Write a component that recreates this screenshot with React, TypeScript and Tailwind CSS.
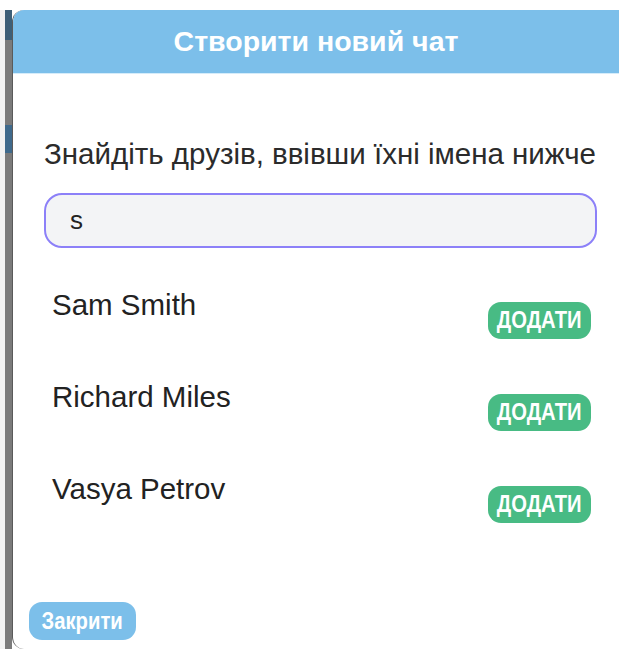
import React from "react";

const friends = ["Sam Smith", "Richard Miles", "Vasya Petrov"];

export default function App() {
  return (
    <div className="w-[619px] h-[649px] bg-white flex flex-col overflow-hidden font-['Liberation_Sans',Arial,sans-serif]">
      <div className="h-[10px] shrink-0" />
      <div className="flex flex-1 min-h-0">
        {/* page behind the dialog */}
        <div className="w-[12px] shrink-0 flex">
          <div className="w-[5px] bg-[#f2f2f2]" />
          <div className="flex-1 flex flex-col bg-[#7b7b7b]">
            <div className="h-[30px] bg-[#3d5f78]" />
            <div className="h-[85px]" />
            <div className="h-[28px] bg-[#3f6a8c]" />
          </div>
        </div>

        {/* dialog */}
        <div className="flex-1 flex flex-col bg-white rounded-l-[12px] overflow-hidden border-l border-[#5a5a5a]">
          <div className="h-[64px] shrink-0 bg-[#7cbfea] border-b border-[#d5ecfa] flex items-center justify-center">
            <h2 className="text-white font-bold text-[28.5px] leading-none whitespace-nowrap">Створити новий чат</h2>
          </div>

          <div className="flex-1 flex flex-col px-[31px]">
            <p className="mt-[62px] text-[29.5px] leading-[36px] text-[#2b2b2b] whitespace-nowrap">
              Знайдіть друзів, ввівши їхні імена нижче
            </p>
            <div className="mt-[21px] h-[55px] w-[553px] rounded-[18px] bg-[#f3f4f6] border-2 border-[#8c80f8] flex items-center px-[24px] text-[26px] text-[#222]">
              s
            </div>

            <div className="mt-[54px] flex flex-col gap-[55px] w-[553px]">
              {friends.map((name) => (
                <div key={name} className="flex justify-between items-start h-[37px] pl-[8px] pr-[6px]">
                  <span className="text-[29.5px] leading-[34px] text-[#222] -mt-[14px] whitespace-nowrap">{name}</span>
                  <button className="h-[37px] w-[103px] rounded-[13px] bg-[#48bb84] text-white font-bold text-[23px] leading-none flex items-center justify-center">
                    <span className="inline-block scale-x-[0.88]">ДОДАТИ</span>
                  </button>
                </div>
              ))}
            </div>

            <div className="flex-1" />
            <div className="mb-[9px] -ml-[15px]">
              <button className="h-[38px] w-[107px] rounded-[13px] bg-[#7cbfea] text-white font-bold text-[23px] leading-none flex items-center justify-center">
                <span className="inline-block scale-x-[0.88]">Закрити</span>
              </button>
            </div>
          </div>
        </div>
      </div>
    </div>
  );
}
